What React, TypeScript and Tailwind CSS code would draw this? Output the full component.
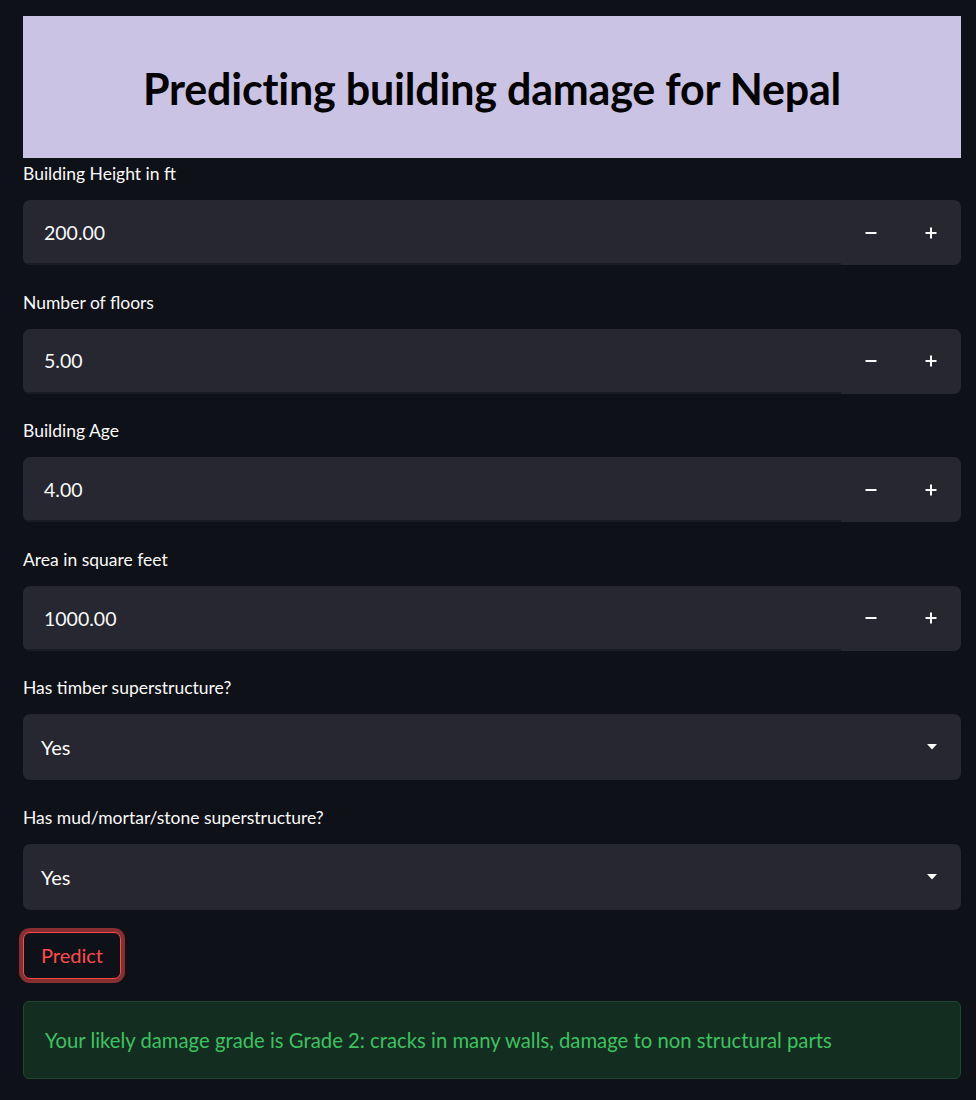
import React from "react"

// ============================================================
// Page data
// ============================================================

interface Field {
  label: string
  value: string
}

const NUMBER_FIELDS: Field[] = [
  { label: "Building Height in ft", value: "200.00" },
  { label: "Number of floors", value: "5.00" },
  { label: "Building Age", value: "4.00" },
  { label: "Area in square feet", value: "1000.00" },
]

const SELECT_FIELDS: Field[] = [
  { label: "Has timber superstructure?", value: "Yes" },
  { label: "Has mud/mortar/stone superstructure?", value: "Yes" },
]

const FONT = "font-['Lato','Noto_Sans',sans-serif]"

// ============================================================
// Pieces
// ============================================================

const Label: React.FC<{ text: string }> = ({ text }) => (
  <div className="h-[28px] pt-[2px] leading-[28px] mb-[14px] text-[17.5px] text-[#fafafa]">
    {text}
  </div>
)

const MinusIcon = () => (
  <svg width="12" height="12" viewBox="0 0 12 12">
    <rect x="0.5" y="5" width="11" height="2" fill="#fafafa" />
  </svg>
)

const PlusIcon = () => (
  <svg width="12" height="12" viewBox="0 0 12 12">
    <rect x="0.5" y="5" width="11" height="2" fill="#fafafa" />
    <rect x="5" y="0.5" width="2" height="11" fill="#fafafa" />
  </svg>
)

const CaretDown = () => (
  <svg width="10" height="6" viewBox="0 0 10 6">
    <path d="M0 0 L10 0 L5 5.5 Z" fill="#fafafa" />
  </svg>
)

const NumberInput: React.FC<Field> = ({ label, value }) => (
  <div className="flex flex-col">
    <Label text={label} />
    <div className="flex h-[65px] rounded-[7px] bg-[#262730] overflow-hidden">
      <div className="flex-1 flex items-center pl-[21px] pt-[2px] border-b-2 border-[#1a1c23] text-[19.5px] text-[#fafafa]">
        {value}
      </div>
      <button className="w-[60px] flex items-center justify-center">
        <MinusIcon />
      </button>
      <button className="w-[60px] flex items-center justify-center">
        <PlusIcon />
      </button>
    </div>
  </div>
)

const SelectBox: React.FC<Field> = ({ label, value }) => (
  <div className="flex flex-col">
    <Label text={label} />
    <div className="flex items-center h-[66px] rounded-[7px] bg-[#262730] pl-[18px] pr-[24px]">
      <span className="flex-1 text-[20px] text-[#fafafa]">{value}</span>
      <CaretDown />
    </div>
  </div>
)

// ============================================================
// Main
// ============================================================

export default function App() {
  return (
    <div className={`min-h-[1100px] bg-[#0e1117] pl-[23px] pr-[15px] pt-[16px] ${FONT}`}>
      <div className="flex flex-col">
        {/* Header banner */}
        <div className="h-[142px] pt-[4px] bg-[#cbc3e3] flex items-center justify-center">
          <h1 className="text-[43px] font-bold text-black tracking-[-0.2px]">
            Predicting building damage for Nepal
          </h1>
        </div>

        <div className="flex flex-col gap-[22px]">
          <div className="flex flex-col gap-[21.6px]">
            {NUMBER_FIELDS.map((f) => (
              <NumberInput key={f.label} label={f.label} value={f.value} />
            ))}
            {SELECT_FIELDS.map((f) => (
              <SelectBox key={f.label} label={f.label} value={f.value} />
            ))}
          </div>

          {/* Predict button */}
          <div>
            <button className="h-[47px] px-[17px] rounded-[7px] border border-[#ff4b4b] ring-[4px] ring-[#ff4b4b]/50 bg-[#0e1117] text-[20px] text-[#ff4b4b]">
              Predict
            </button>
          </div>

          {/* Result alert */}
          <div className="h-[78px] rounded-[6px] border border-[#1d4a2c] bg-[#132d21] flex items-center pl-[21px] text-[20.3px] text-[#3dc260]">
            Your likely damage grade is Grade 2: cracks in many walls, damage to non structural parts
          </div>
        </div>
      </div>
    </div>
  )
}
